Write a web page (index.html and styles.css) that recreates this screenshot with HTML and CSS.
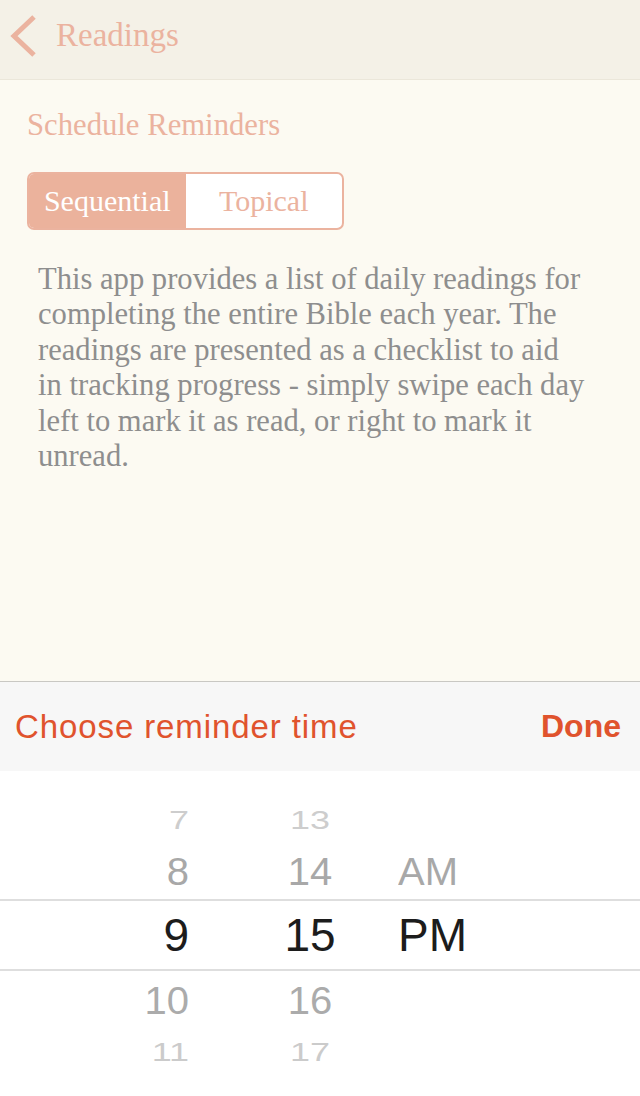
FILE: index.html
```html
<!DOCTYPE html>
<html>
<head>
<meta charset="utf-8">
<link rel="stylesheet" href="styles.css">
</head>
<body>
<div class="screen">
  <header class="nav">
    <svg class="back" width="30" height="42" viewBox="0 0 30 42"><path d="M25 2 L5 21 L25 40" fill="none" stroke="#ebb39f" stroke-width="5"/></svg>
    <span class="nav-title">Readings</span>
  </header>
  <main class="content">
    <h1 class="title">Schedule Reminders</h1>
    <div class="segmented">
      <div class="seg seg-on">Sequential</div>
      <div class="seg">Topical</div>
    </div>
    <p class="desc">This app provides a list of daily readings for<br>completing the entire Bible each year. The<br>readings are presented as a checklist to aid<br>in tracking progress - simply swipe each day<br>left to mark it as read, or right to mark it<br>unread.</p>
  </main>
  <section class="sheet">
    <div class="toolbar">
      <span class="tb-title">Choose reminder time</span>
      <span class="tb-done">Done</span>
    </div>
    <div class="wheel">
      <div class="row r1"><span class="h"><i>7</i></span><span class="m"><i>13</i></span><span class="p"></span></div>
      <div class="row r2"><span class="h"><i>8</i></span><span class="m"><i>14</i></span><span class="p"><i>AM</i></span></div>
      <div class="row r3"><span class="h"><i>9</i></span><span class="m"><i>15</i></span><span class="p"><i>PM</i></span></div>
      <div class="row r4"><span class="h"><i>10</i></span><span class="m"><i>16</i></span><span class="p"></span></div>
      <div class="row r5"><span class="h"><i>11</i></span><span class="m"><i>17</i></span><span class="p"></span></div>
    </div>
  </section>
</div>
</body>
</html>
```
FILE: styles.css
```css
* { box-sizing: border-box; margin: 0; padding: 0; }
html, body { width: 640px; height: 1096px; overflow: hidden; }
body { background: #fcfaf2; font-family: "Liberation Serif", serif; }
.screen { display: flex; flex-direction: column; height: 1096px; }
.nav { height: 80px; flex: none; background: #f4f1e7; border-bottom: 1px solid #ebe7da; display: flex; align-items: center; padding: 0 0 8px 9px; gap: 17px; }
.back { display: block; margin-top: 0; }
.nav-title { font-size: 33px; color: #ebb39f; }
.content { flex: 1; padding: 27px 0 0 27px; background: #fcfaf2; }
.title { font-weight: normal; font-size: 30.7px; line-height: 36px; color: #ebb39f; }
.segmented { margin-top: 29px; width: 317px; height: 58px; border: 2px solid #ebb39f; border-radius: 7px; display: flex; overflow: hidden; background: #fff; }
.seg { flex: 1; display: flex; align-items: center; justify-content: center; font-size: 30px; color: #ebb39f; }
.seg-on { background: #ebb29c; color: #fff; }
.desc { margin-top: 32px; margin-left: 11px; font-size: 30.6px; line-height: 35.4px; color: #8e8e8e; white-space: nowrap; }
.sheet { flex: none; height: 415px; display: flex; flex-direction: column; border-top: 1px solid #c9c8c3; }
.toolbar { height: 89px; flex: none; background: #f7f7f7; display: flex; align-items: center; justify-content: space-between; padding: 0 19px 0 15px; font-family: "Liberation Sans", sans-serif; color: #e0532d; }
.tb-title { font-size: 33px; letter-spacing: 0.9px; }
.tb-done { font-size: 32px; font-weight: bold; }
.wheel { flex: 1; background: #fff; padding-top: 25px; font-family: "Liberation Sans", sans-serif; }
.row { display: grid; grid-template-columns: 189px 209px 1fr; align-items: center; }
.row span { display: flex; align-items: center; }
.row i { font-style: normal; display: block; }
.h { justify-content: flex-end; }
.m { justify-content: center; padding-left: 33px; }
.p { justify-content: flex-start; }
.r1 { height: 50px; font-size: 36px; color: #cdcdcd; }
.r1 i { transform: scaleY(0.7); }
.r2 { height: 53px; font-size: 40px; color: #a8a8a8; }
.r2 i { transform: scaleY(0.95); }
.r3 { height: 72px; font-size: 46px; color: #1c1c1c; border-top: 2px solid #dedede; border-bottom: 2px solid #dedede; }
.r4 { height: 60px; font-size: 40px; color: #ababab; }
.r4 i { transform: scaleY(0.95); }
.r5 { height: 42px; font-size: 36px; color: #cbcbcb; }
.r5 i { transform: scaleY(0.72); }
```
